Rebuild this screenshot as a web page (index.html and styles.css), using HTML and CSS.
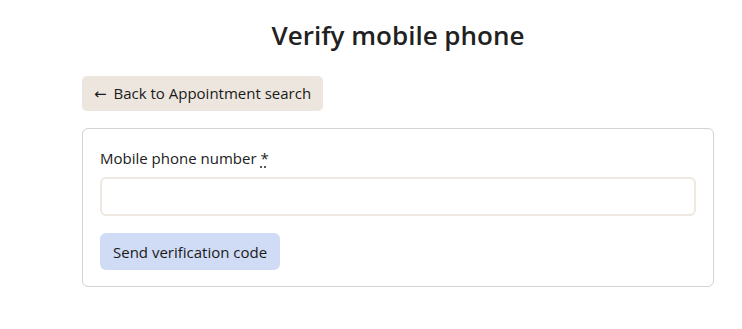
FILE: index.html
```
<!DOCTYPE html>
<html lang="en">
<head>
<meta charset="utf-8">
<title>Verify mobile phone</title>
<link rel="stylesheet" href="styles.css">
</head>
<body>
<main class="page">
  <h1 class="title">Verify mobile phone</h1>
  <a class="back-btn" href="#"><span class="arrow">←</span> Back to Appointment search</a>
  <form class="card">
    <label class="label" for="phone">Mobile phone number <abbr class="req" title="required">*</abbr></label>
    <input class="input" id="phone" type="tel">
    <button class="send-btn" type="button">Send verification code</button>
  </form>
</main>
</body>
</html>
```
FILE: styles.css
```
* { box-sizing: border-box; }
html, body { margin: 0; padding: 0; background: #fff; }
body {
  font-family: "Open Sans", "Noto Sans", sans-serif;
  color: #212121;
  font-size: 15px;
}
.page {
  width: 632px;
  margin-left: 82px;
  padding-top: 17px;
  display: flex;
  flex-direction: column;
  align-items: flex-start;
}
.title {
  align-self: stretch;
  text-align: center;
  font-size: 26px;
  font-weight: 600;
  margin: 0 0 23px 0;
  line-height: 36px;
}
.back-btn {
  display: inline-block;
  background: #ede6df;
  color: #1a1a1a;
  text-decoration: none;
  border-radius: 5px;
  height: 35px;
  line-height: 35px;
  padding: 0 12px;
  font-size: 15px;
  margin-bottom: 17px;
}
.arrow {
  font-family: "DejaVu Sans", sans-serif;
  font-size: 15px;
  margin-right: 3px;
}
.card {
  align-self: stretch;
  border: 1px solid #d3d3d3;
  border-radius: 6px;
  padding: 19px 17px 16px 17px;
  display: flex;
  flex-direction: column;
  align-items: flex-start;
}
.label {
  font-size: 15px;
  line-height: 20px;
  margin-bottom: 9px;
}
.req {
  text-decoration: underline dotted;
  text-underline-offset: 3px;
  cursor: help;
}
.input {
  align-self: stretch;
  height: 39px;
  border: 2px solid #eee8e0;
  border-radius: 6px;
  margin: 0 0 17px 0;
  font: inherit;
  padding: 0 10px;
}
.send-btn {
  background: #d0dcf5;
  border: none;
  border-radius: 6px;
  height: 37px;
  padding: 0 13px;
  font: inherit;
  font-size: 15px;
  color: #1a1a1a;
}
```
